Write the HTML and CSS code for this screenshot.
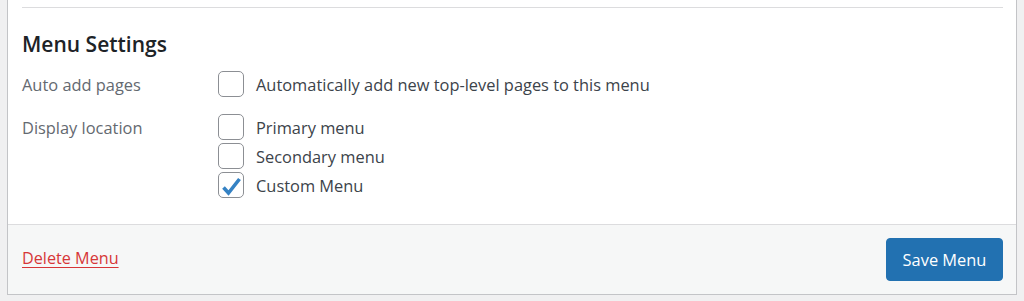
FILE: index.html
```html
<!DOCTYPE html>
<html lang="en">
<head>
<meta charset="utf-8">
<title>Menu Settings</title>
<link rel="stylesheet" href="styles.css">
</head>
<body>
<div class="panel">
  <div class="panel-body">
    <div class="settings">
      <h3 class="settings-title">Menu Settings</h3>
      <div class="row row-auto">
        <div class="row-label">Auto add pages</div>
        <div class="row-options">
          <label class="option"><span class="box"></span><span class="option-text">Automatically add new top-level pages to this menu</span></label>
        </div>
      </div>
      <div class="row row-locations">
        <div class="row-label">Display location</div>
        <div class="row-options">
          <label class="option"><span class="box"></span><span class="option-text">Primary menu</span></label>
          <label class="option"><span class="box"></span><span class="option-text">Secondary menu</span></label>
          <label class="option"><span class="box is-checked"><svg viewBox="0 0 26 26" width="26" height="26"><path d="M5.5 15.5 L10.5 21 L21.5 7" fill="none" stroke="#3582c4" stroke-width="3.6" stroke-linejoin="miter"/></svg></span><span class="option-text">Custom Menu</span></label>
        </div>
      </div>
    </div>
  </div>
  <div class="panel-footer">
    <a class="delete-link" href="#">Delete Menu</a>
    <button class="save-btn" type="button">Save Menu</button>
  </div>
</div>
</body>
</html>
```
FILE: styles.css
```css
html, body {
  margin: 0;
  padding: 0;
  background: #f0f0f1;
  font-family: "Open Sans", "Noto Sans", sans-serif;
  color: #3c434a;
}
.panel {
  margin: 0 7px 6px 7px;
  background: #fff;
  border: 1px solid #c3c4c7;
  border-top: none;
  height: 295px;
  box-sizing: border-box;
  display: flex;
  flex-direction: column;
}
.panel-body {
  padding: 7px 13px 0 14px;
  flex: 1;
}
.settings {
  border-top: 1px solid #dcdcde;
}
.settings-title {
  margin: 0;
  padding-top: 22px;
  font-size: 21px;
  line-height: 28px;
  font-weight: 600;
  color: #1d2327;
}
.row {
  display: flex;
  font-size: 16.4px;
  line-height: 26px;
}
.row-auto {
  margin-top: 13px;
}
.row-locations {
  margin-top: 16px;
}
.row-label {
  width: 196px;
  flex: none;
  padding-top: 1px;
  color: #646970;
}
.row-options {
  display: flex;
  flex-direction: column;
  gap: 3px;
}
.option {
  display: flex;
  align-items: flex-start;
  height: 26px;
  gap: 12px;
  color: #3c434a;
}
.option-text {
  padding-top: 1px;
  line-height: 25px;
}
.box {
  position: relative;
  width: 26px;
  height: 26px;
  flex: none;
  box-sizing: border-box;
  border: 1px solid #8c8f94;
  border-radius: 5px;
  background: #fff;
}
.box svg {
  position: absolute;
  left: -1px;
  top: -1px;
  display: block;
}
.panel-footer {
  border-top: 1px solid #dcdcde;
  background: #f6f7f7;
  height: 70px;
  box-sizing: border-box;
  display: flex;
  align-items: center;
  justify-content: space-between;
  padding: 0 13px 0 14px;
}
.delete-link {
  color: #d63638;
  font-size: 16.2px;
  line-height: 22px;
  margin-top: -4px;
  text-decoration: underline;
  text-underline-offset: 3px;
}
.save-btn {
  width: 117px;
  height: 43px;
  background: #2271b1;
  border: 1px solid #2271b1;
  border-radius: 4px;
  color: #fff;
  font-family: "Open Sans", "Noto Sans", sans-serif;
  font-size: 16.4px;
  padding: 0;
}
```
